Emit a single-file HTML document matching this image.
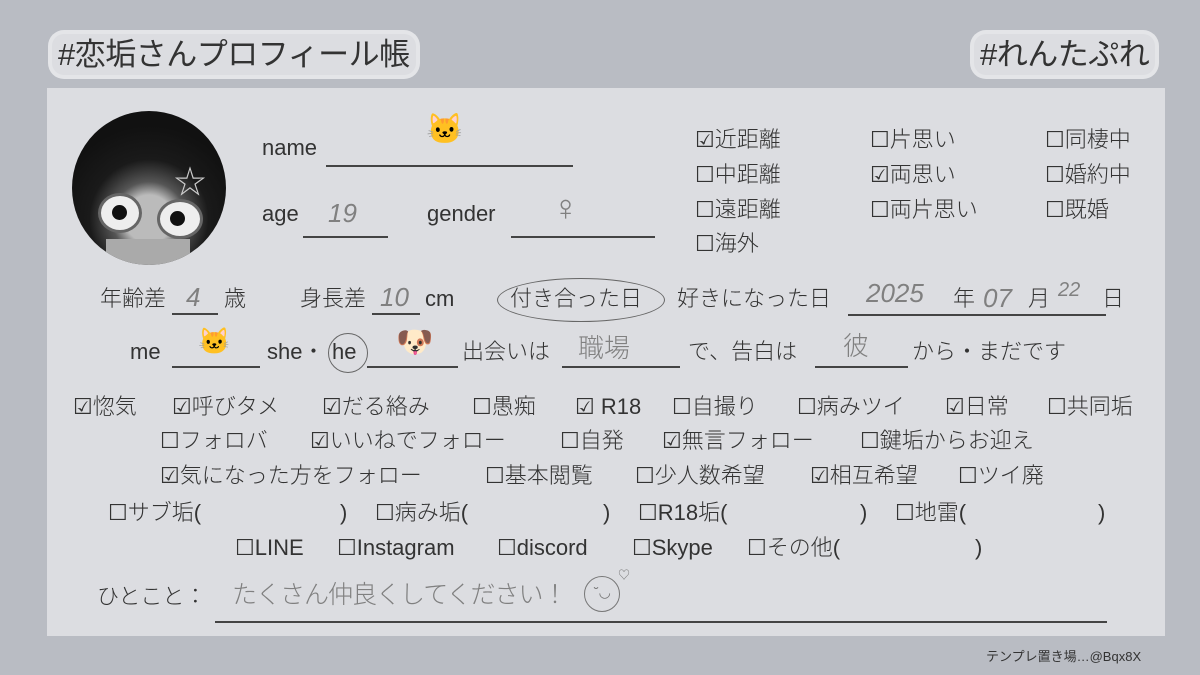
<!DOCTYPE html>
<html><head><meta charset="utf-8"><style>
*{margin:0;padding:0;box-sizing:border-box}
body{width:1200px;height:675px;background:#b9bcc3;position:relative;overflow:hidden;font-family:"Liberation Sans","Noto Sans CJK JP",sans-serif;color:#333}
.card{position:absolute;left:47px;top:88px;width:1118px;height:548px;background:#dcdde1}
.t{position:absolute;font-size:22px;line-height:1;white-space:nowrap;font-weight:300}
.h{position:absolute;font-size:31px;line-height:1;white-space:nowrap;color:#333;background:#dcdde1;border-radius:12px;padding:5px 6px;box-shadow:0 0 0 4px #e4e5e8;letter-spacing:-0.5px}
.u{position:absolute;height:1.5px;background:#444}
.w{position:absolute;font-size:26px;color:#808080;white-space:nowrap;line-height:1;font-style:italic;font-weight:300}
.e{position:absolute;font-size:30px;line-height:1}
.c{position:absolute;border:1.5px solid #666;border-radius:50%}
</style></head><body>
<div class="h" style="left:52px;top:34px">#恋垢さんプロフィール帳</div>
<div class="h" style="left:974px;top:34px">#れんたぷれ</div>
<div class="card"></div>
<div style="position:absolute;left:72px;top:111px;width:154px;height:154px;border-radius:50%;background:radial-gradient(circle at 50% 70%,#bbb 0 18%,#555 28%,#1a1a1a 45%,#111 70%);overflow:hidden">
<div style="position:absolute;left:26px;top:82px;width:44px;height:40px;border-radius:50%;background:#eee;border:3px solid #666"></div>
<div style="position:absolute;left:85px;top:88px;width:46px;height:40px;border-radius:50%;background:#eee;border:3px solid #666"></div>
<div style="position:absolute;left:40px;top:94px;width:15px;height:15px;border-radius:50%;background:#111"></div>
<div style="position:absolute;left:98px;top:100px;width:15px;height:15px;border-radius:50%;background:#111"></div>
<div style="position:absolute;left:102px;top:46px;color:#ccc;font-size:32px">☆</div>
<div style="position:absolute;left:34px;top:128px;width:84px;height:30px;background:#aaa"></div>
</div>
<span class="t" style="left:262px;top:137px">name</span><div class="u" style="left:326px;top:165px;width:247px"></div><span class="e" style="left:426px;top:115px">🐱</span>
<span class="t" style="left:262px;top:203px">age</span><div class="u" style="left:303px;top:236px;width:85px"></div><span class="w" style="left:328px;top:200px">19</span>
<span class="t" style="left:427px;top:203px">gender</span><div class="u" style="left:511px;top:236px;width:144px"></div><span class="w" style="left:552px;top:190px;font-size:36px;font-style:normal">♀</span>

<span class="t" style="left:695px;top:129px">☑近距離</span><span class="t" style="left:870px;top:129px">☐片思い</span><span class="t" style="left:1045px;top:129px">☐同棲中</span>
<span class="t" style="left:695px;top:164px">☐中距離</span><span class="t" style="left:870px;top:164px">☑両思い</span><span class="t" style="left:1045px;top:164px">☐婚約中</span>
<span class="t" style="left:695px;top:199px">☐遠距離</span><span class="t" style="left:870px;top:199px">☐両片思い</span><span class="t" style="left:1045px;top:199px">☐既婚</span>
<span class="t" style="left:695px;top:233px">☐海外</span>

<span class="t" style="left:100px;top:288px">年齢差</span><div class="u" style="left:172px;top:313px;width:46px"></div><span class="w" style="left:186px;top:284px">4</span><span class="t" style="left:224px;top:288px">歳</span>
<span class="t" style="left:300px;top:288px">身長差</span><div class="u" style="left:372px;top:313px;width:48px"></div><span class="w" style="left:380px;top:284px">10</span><span class="t" style="left:425px;top:288px">cm</span>
<div class="c" style="left:497px;top:278px;width:168px;height:44px"></div>
<span class="t" style="left:510px;top:288px">付き合った日</span>
<span class="t" style="left:677px;top:288px">好きになった日</span><div class="u" style="left:848px;top:314px;width:258px"></div>
<span class="w" style="left:866px;top:280px">2025</span><span class="t" style="left:953px;top:288px">年</span><span class="w" style="left:983px;top:285px">07</span><span class="t" style="left:1028px;top:288px">月</span><span class="w" style="left:1058px;top:280px;font-size:20px">22</span><span class="t" style="left:1102px;top:288px">日</span>

<span class="t" style="left:130px;top:341px">me</span><div class="u" style="left:172px;top:366px;width:88px"></div><span class="e" style="left:198px;top:328px;font-size:26px">🐱</span>
<span class="t" style="left:267px;top:341px">she・</span><div class="c" style="left:328px;top:333px;width:40px;height:40px"></div><span class="t" style="left:332px;top:341px">he</span>
<div class="u" style="left:367px;top:366px;width:91px"></div><span class="e" style="left:396px;top:328px">🐶</span>
<span class="t" style="left:462px;top:341px">出会いは</span><div class="u" style="left:562px;top:366px;width:118px"></div><span class="w" style="left:578px;top:335px;font-style:normal">職場</span>
<span class="t" style="left:688px;top:341px">で、告白は</span><div class="u" style="left:815px;top:366px;width:93px"></div><span class="w" style="left:843px;top:333px;font-style:normal">彼</span>
<span class="t" style="left:912px;top:341px">から・まだです</span>

<span class="t" style="left:73px;top:396px">☑惚気</span><span class="t" style="left:172px;top:396px">☑呼びタメ</span><span class="t" style="left:322px;top:396px">☑だる絡み</span><span class="t" style="left:472px;top:396px">☐愚痴</span><span class="t" style="left:575px;top:396px">☑ R18</span><span class="t" style="left:672px;top:396px">☐自撮り</span><span class="t" style="left:797px;top:396px">☐病みツイ</span><span class="t" style="left:945px;top:396px">☑日常</span><span class="t" style="left:1047px;top:396px">☐共同垢</span>
<span class="t" style="left:160px;top:430px">☐フォロバ</span><span class="t" style="left:310px;top:430px">☑いいねでフォロー</span><span class="t" style="left:560px;top:430px">☐自発</span><span class="t" style="left:662px;top:430px">☑無言フォロー</span><span class="t" style="left:860px;top:430px">☐鍵垢からお迎え</span>
<span class="t" style="left:160px;top:465px">☑気になった方をフォロー</span><span class="t" style="left:485px;top:465px">☐基本閲覧</span><span class="t" style="left:635px;top:465px">☐少人数希望</span><span class="t" style="left:810px;top:465px">☑相互希望</span><span class="t" style="left:958px;top:465px">☐ツイ廃</span>
<span class="t" style="left:108px;top:502px">☐サブ垢(</span><span class="t" style="left:340px;top:502px">)</span><span class="t" style="left:375px;top:502px">☐病み垢(</span><span class="t" style="left:603px;top:502px">)</span><span class="t" style="left:638px;top:502px">☐R18垢(</span><span class="t" style="left:860px;top:502px">)</span><span class="t" style="left:895px;top:502px">☐地雷(</span><span class="t" style="left:1098px;top:502px">)</span>
<span class="t" style="left:235px;top:537px">☐LINE</span><span class="t" style="left:337px;top:537px">☐Instagram</span><span class="t" style="left:497px;top:537px">☐discord</span><span class="t" style="left:632px;top:537px">☐Skype</span><span class="t" style="left:747px;top:537px">☐その他(</span><span class="t" style="left:975px;top:537px">)</span>
<span class="t" style="left:97px;top:586px">ひとこと：</span><div class="u" style="left:215px;top:621px;width:892px"></div>
<span class="w" style="left:232px;top:583px;font-style:normal;font-size:25px;letter-spacing:-1px">たくさん仲良くしてください！</span>
<div class="c" style="left:584px;top:576px;width:36px;height:36px;border-color:#777"></div><span style="position:absolute;left:594px;top:584px;font-size:14px;color:#777">˘◡</span><span style="position:absolute;left:618px;top:566px;font-size:12px;color:#777">♡</span>
<span style="position:absolute;left:986px;top:646px;font-size:13px;color:#333;white-space:nowrap">テンプレ置き場…@Bqx8X</span>
</body></html>
